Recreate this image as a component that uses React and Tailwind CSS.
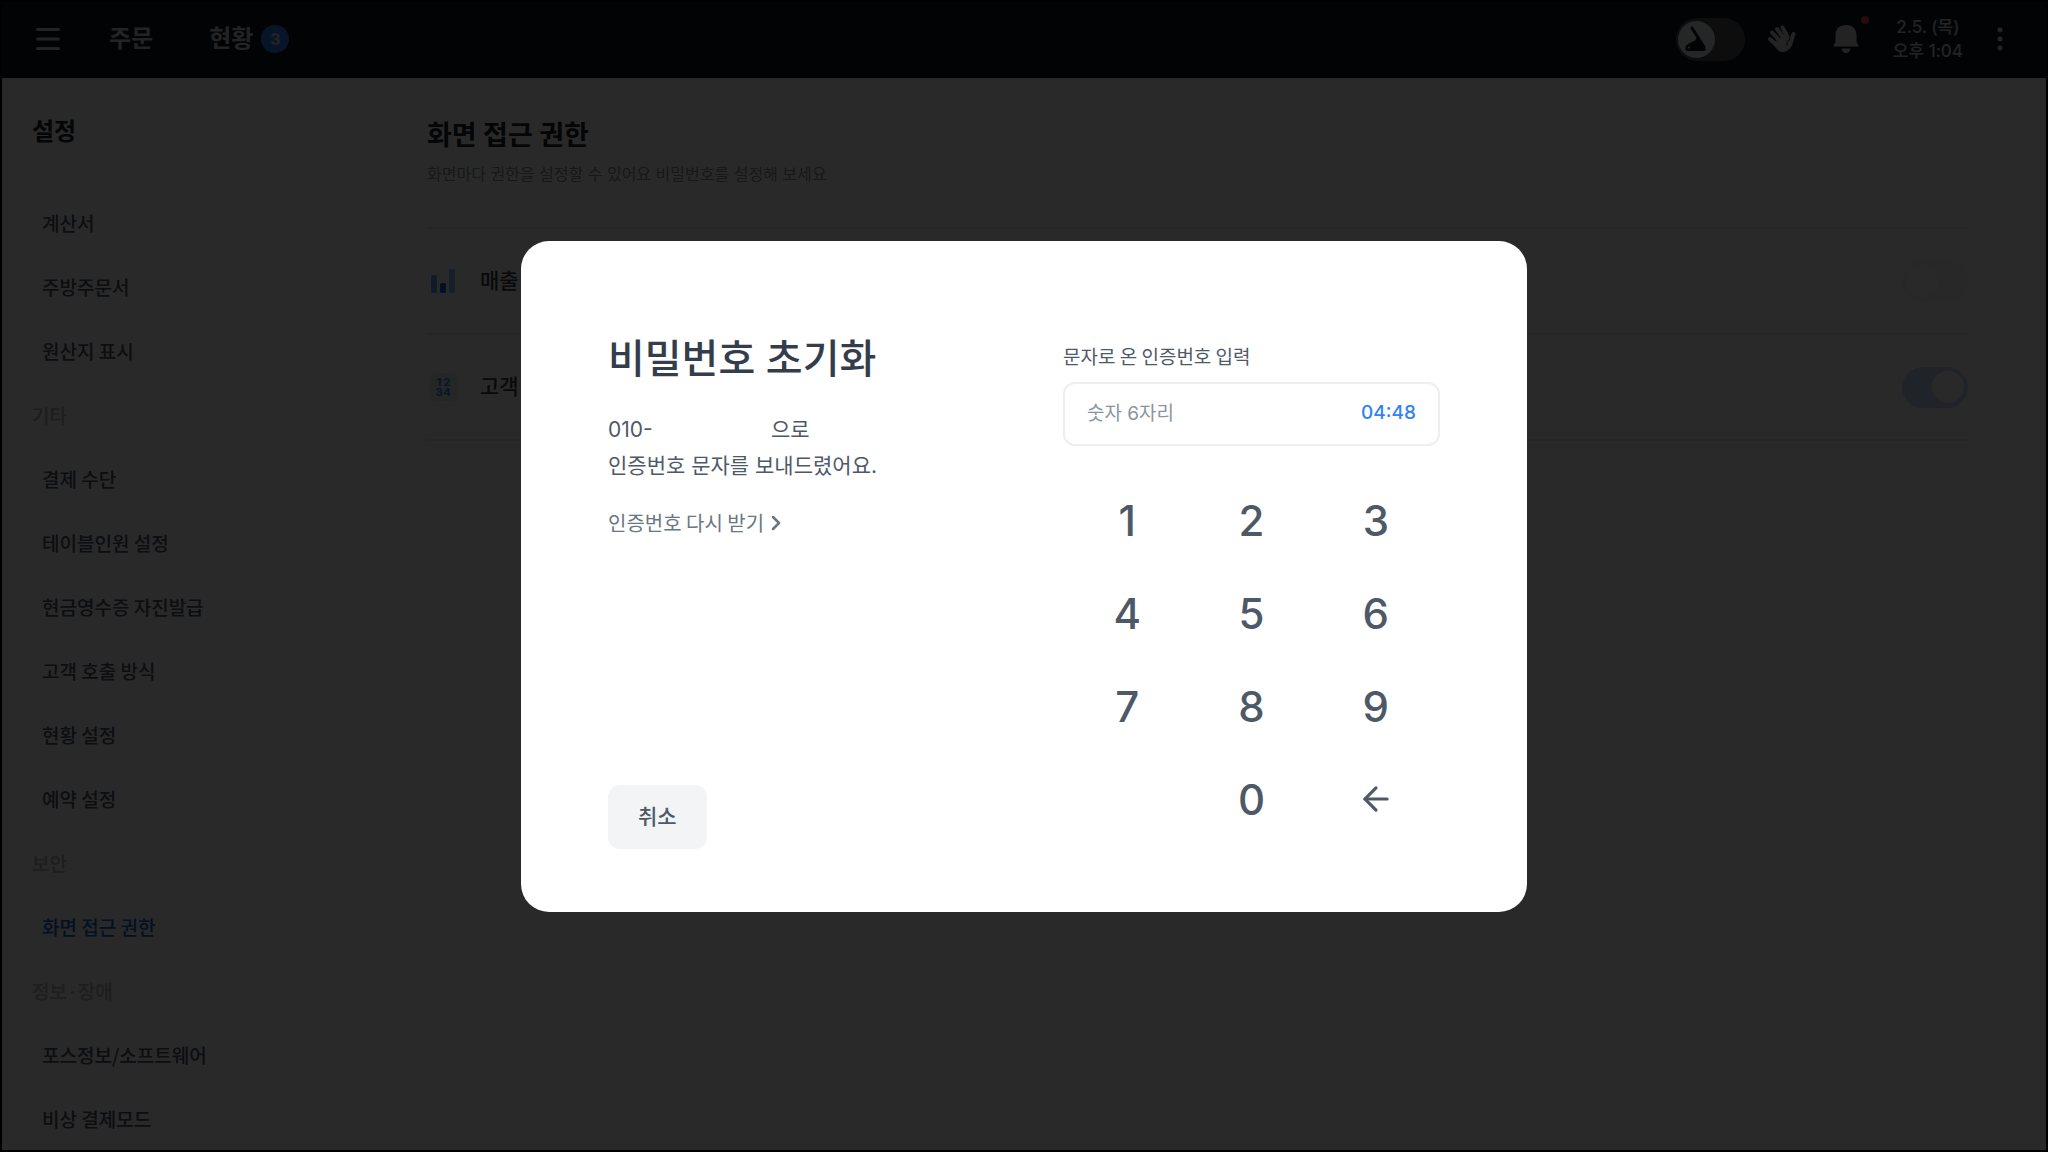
import { useState } from 'react';
import { ChevronRight, ArrowLeft } from 'lucide-react';

const menus = [
    { label: '계산서' },
    { label: '주방주문서' },
    { label: '원산지 표시' },
    { label: '기타', section: true },
    { label: '결제 수단' },
    { label: '테이블인원 설정' },
    { label: '현금영수증 자진발급' },
    { label: '고객 호출 방식' },
    { label: '현황 설정' },
    { label: '예약 설정' },
    { label: '보안', section: true },
    { label: '화면 접근 권한', active: true },
    { label: '정보·장애', section: true },
    { label: '포스정보/소프트웨어' },
    { label: '비상 결제모드' },
];

const keys = ['1', '2', '3', '4', '5', '6', '7', '8', '9', '', '0', 'back'];

function Header() {
    return (
        <header className="flex h-[76px] shrink-0 items-center bg-[#111820] pr-[39px] pb-0.5 pl-[34px] text-[#d9dbde]">
            <button aria-label="메뉴">
                <svg width="24" height="24" viewBox="0 0 24 24" stroke="currentColor" strokeWidth="3" strokeLinecap="round">
                    <path d="M1.5 2.5h21M1.5 12h21M1.5 21.5h21" />
                </svg>
            </button>
            <nav className="ml-[49px] flex items-center gap-14 text-2xl font-bold">
                <a href="#order">주문</a>
                <a href="#status" className="flex items-center gap-2">
                    현황
                    <span className="flex size-7 items-center justify-center rounded-full bg-[#3182f6] text-base">3</span>
                </a>
            </nav>

            <div className="ml-auto flex items-center">
                <label className="relative flex h-[43px] w-[69px] items-center rounded-full bg-[#505359] px-0.5">
                    <input type="checkbox" className="peer sr-only" aria-label="청소 모드" />
                    <span className="flex size-[37px] items-center justify-center rounded-full bg-[#e5e8eb]">
                        <svg width="24" height="28" viewBox="0 0 24 28" fill="#111820">
                            <path d="M8 3 20 22" stroke="#111820" strokeWidth="3" strokeLinecap="round" />
                            <path d="M13 12.500 21.500 23.500q1 2.500-1.500 2.500H4q-2.500 0-2.500-2.500 0-3.500 3.500-5l6-3z" />
                            <circle cx="5" cy="22.500" r="1" fill="#e5e8eb" />
                        </svg>
                    </span>
                </label>
                <button aria-label="직원 호출" className="ml-[22px]">
                    <svg width="30" height="30" viewBox="0 0 30 30" fill="none" stroke="currentColor" strokeLinecap="round" strokeLinejoin="round">
                        <path d="M3 15 9 20.500M5 8.500 13 17M10 5 16.500 14M15.500 3.500 20.500 13" strokeWidth="4" />
                        <path d="M26.500 10q-1 2.500-2 6.500" strokeWidth="4" />
                        <path d="M6 19 19 11.500q2 2 3 5 1-1 4-2-.5 7-3.500 10-4 4-9 3-4-2-7.500-8.500z" fill="currentColor" strokeWidth="1" />
                        <path d="M20 21q-.5-4 3-5.500" stroke="#111820" strokeWidth="1" />
                    </svg>
                </button>
                <button aria-label="알림" className="relative ml-9">
                    <svg width="26" height="30" viewBox="0 0 26 30" fill="currentColor">
                        <path d="M13 1C6.500 1 2.500 5 2.500 11v7L.5 21q-.5 1.500 1 1.500h23q1.500 0 1-1.500l-2-3v-7C23.500 5 19.500 1 13 1z" />
                        <path d="M8.500 24.500h9q-1 4.500-4.500 4.500t-4.500-4.500z" />
                    </svg>
                    <span className="absolute -top-2 -right-2.5 size-2 rounded-full bg-[#f04452]" />
                </button>
                <time className="ml-[34px] text-center text-[17px] leading-6 font-medium">
                    2.5. (목)<br />오후 1:04
                </time>
                <button aria-label="더보기" className="ml-[30px] px-1">
                    <svg width="6" height="24" viewBox="0 0 6 24" fill="currentColor">
                        <circle cx="3" cy="3" r="2.500" />
                        <circle cx="3" cy="12" r="2.500" />
                        <circle cx="3" cy="21" r="2.500" />
                    </svg>
                </button>
            </div>
        </header>
    );
}

function Sidebar() {
    return (
        <aside className="w-[346px] shrink-0 overflow-hidden bg-[#fafafa] pt-[34px] pl-[30px] font-['Noto_Sans_CJK_KR',sans-serif]">
            <h2 className="mb-[43px] text-2xl leading-9 font-bold text-[#191f28]">설정</h2>
            <nav className="text-[19px] font-medium">
                {menus.map((item) =>
                    item.section ? (
                        <p key={item.label} className="flex h-16 items-center text-[#b0b8c1]">{item.label}</p>
                    ) : (
                        <a
                            key={item.label}
                            href="#menu"
                            className={`flex h-16 items-center pl-2.5 ${item.active ? 'text-[#1b64da]' : 'text-[#4e5968]'}`}
                        >
                            {item.label}
                        </a>
                    )
                )}
            </nav>
        </aside>
    );
}

function SettingRow({ icon, label, checked }) {
    return (
        <label className="flex h-[106px] items-center border-b-2 border-[#e6e8ea]">
            <span className="flex w-[53px] pl-0.5">{icon}</span>
            <span className="text-[21px] font-medium text-[#333d4b]">{label}</span>
            <input type="checkbox" defaultChecked={checked} className="peer sr-only" />
            <span className="ml-auto flex h-[41px] w-[66px] items-center rounded-full bg-[#f4f4f4] px-1 peer-checked:justify-end peer-checked:bg-[#c8d6fc]">
                <span className="size-8 rounded-full bg-white" />
            </span>
        </label>
    );
}

function Content() {
    return (
        <main className="min-w-0 grow bg-white pt-[38px] pr-[78px] pl-[79px]">
            <h1 className="text-[27px] leading-10 font-bold text-[#191f28]">화면 접근 권한</h1>
            <p className="mt-1.5 mb-[41px] text-base text-[#8b95a1]">
                화면마다 권한을 설정할 수 있어요 비밀번호를 설정해 보세요
            </p>
            <div className="border-t-2 border-[#e6e8ea]">
                <SettingRow
                    label="매출 리포트"
                    icon={
                        <svg width="28" height="28" viewBox="0 0 28 28">
                            <rect x="2" y="8" width="6" height="18" rx="1.500" fill="#64a8ff" />
                            <rect x="11" y="16" width="6" height="10" rx="1.500" fill="#1b64da" />
                            <rect x="20" y="2" width="6" height="24" rx="1.500" fill="#90c2ff" />
                        </svg>
                    }
                />
                <SettingRow
                    label="고객 정보"
                    checked
                    icon={
                        <span className="grid size-7 grid-cols-2 place-content-center rounded-md bg-[#e5e8eb] px-1.5 text-center text-[11px] leading-[10px] font-bold text-[#3182f6]">
                            <span>1</span>
                            <span>2</span>
                            <span>3</span>
                            <span>4</span>
                        </span>
                    }
                />
            </div>
        </main>
    );
}

function ResetPasswordDialog() {
    const [code, setCode] = useState('');

    const press = (key) => {
        if (key === 'back') setCode(code.slice(0, -1));
        else if (code.length < 6) setCode(code + key);
    };

    return (
        <div className="fixed inset-0 flex items-center justify-center bg-black/84">
            <section
                role="dialog"
                aria-modal="true"
                aria-labelledby="reset-title"
                className="flex w-[1006px] justify-between rounded-[28px] bg-white px-[87px] pt-[88px] pb-[63px]"
            >
                <div className="flex flex-col items-start text-[#4e5968]">
                    <h2 id="reset-title" className="text-[40px] leading-[60px] font-medium text-[#333d4b]">비밀번호 초기화</h2>
                    <p className="mt-[23px] text-[21px] leading-9">
                        <span className="inline-block w-[163px]">010-</span>으로<br />
                        인증번호 문자를 보내드렸어요.
                    </p>
                    <button className="mt-[23px] flex items-center font-['Noto_Sans_CJK_KR',sans-serif] text-[20px] leading-8 text-[#6b7684]">
                        인증번호 다시 받기
                        <ChevronRight size={24} strokeWidth={2.5} />
                    </button>
                    <button className="mt-auto h-16 rounded-xl bg-[#f2f4f6] px-[30px] text-[21px] font-medium">취소</button>
                </div>

                <div className="w-[377px] pt-[11px] pb-[3px] text-[#4e5968]">
                    <label htmlFor="code" className="block font-['Noto_Sans_CJK_KR',sans-serif] text-[19px] leading-8">
                        문자로 온 인증번호 입력
                    </label>
                    <div className="mt-2.5 flex h-16 items-center rounded-xl border-2 border-[#eceef0] px-[22px] text-[19px]">
                        <input
                            id="code"
                            value={code}
                            readOnly
                            placeholder="숫자 6자리"
                            className="min-w-0 grow pt-0.5 outline-none placeholder:text-[#8b95a1]"
                        />
                        <span className="font-medium text-[#3182f6]">04:48</span>
                    </div>
                    <div className="mt-7 grid grid-cols-3 px-0.5">
                        {keys.map((key, idx) =>
                            key ? (
                                <button
                                    key={idx}
                                    onClick={() => press(key)}
                                    aria-label={key === 'back' ? '지우기' : undefined}
                                    className="flex h-[93px] items-center justify-center text-[42px] font-medium"
                                >
                                    {key === 'back' ? <ArrowLeft size={38} /> : key}
                                </button>
                            ) : (
                                <span key={idx} />
                            )
                        )}
                    </div>
                </div>
            </section>
        </div>
    );
}

export default function App() {
    return (
        <div className="flex h-screen flex-col overflow-hidden border-2 border-black font-['Inter','Noto_Sans_CJK_KR',sans-serif]">
            <Header />
            <div className="flex min-h-0 grow">
                <Sidebar />
                <Content />
            </div>
            <ResetPasswordDialog />
        </div>
    );
}
